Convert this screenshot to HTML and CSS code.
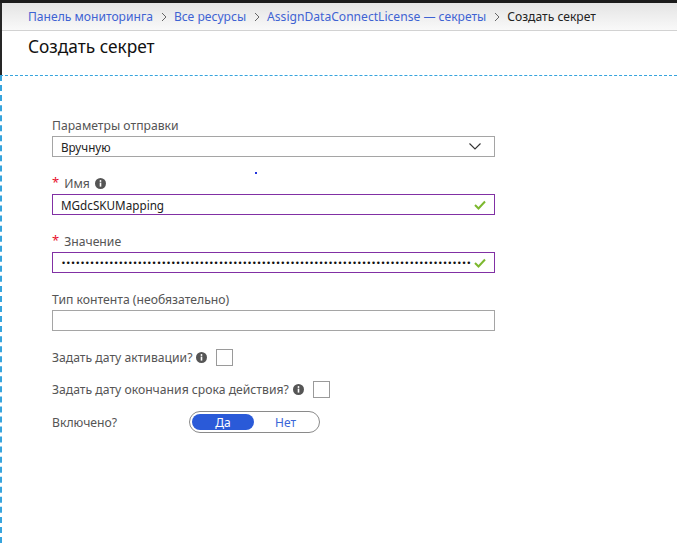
FILE: index.html
```html
<!DOCTYPE html>
<html lang="ru">
<head>
<meta charset="utf-8">
<title>Создать секрет</title>
<link rel="stylesheet" href="styles.css">
</head>
<body>
<div class="topbar"></div>
<header class="head">
  <nav class="crumbs">
    <a class="crumb">Панель мониторинга</a>
    <span class="sep"><svg width="8" height="10" viewBox="0 0 8 10"><polyline points="2,1 6,5 2,9" fill="none" stroke="#666" stroke-width="1"/></svg></span>
    <a class="crumb">Все ресурсы</a>
    <span class="sep"><svg width="8" height="10" viewBox="0 0 8 10"><polyline points="2,1 6,5 2,9" fill="none" stroke="#666" stroke-width="1"/></svg></span>
    <a class="crumb">AssignDataConnectLicense — секреты</a>
    <span class="sep"><svg width="8" height="10" viewBox="0 0 8 10"><polyline points="2,1 6,5 2,9" fill="none" stroke="#666" stroke-width="1"/></svg></span>
    <span class="current">Создать секрет</span>
  </nav>
  <div class="titlebar">
    <h1 class="title">Создать секрет</h1>
  </div>
</header>
<main class="form">
  <span class="stray-dot"></span>
  <div class="field">
    <label class="label">Параметры отправки</label>
    <div class="box box-select">
      <span class="value">Вручную</span>
      <svg class="chev" width="12" height="7" viewBox="0 0 12 7"><polyline points="0.5,0.5 6,6 11.5,0.5" fill="none" stroke="#333" stroke-width="1.1"/></svg>
    </div>
  </div>
  <div class="field">
    <label class="label"><span class="req">*</span>Имя<svg class="info" width="11" height="11" viewBox="0 0 11 11"><circle cx="5.5" cy="5.5" r="5.5" fill="#555"/><rect x="4.7" y="4.6" width="1.6" height="4" fill="#fff"/><circle cx="5.5" cy="3" r="0.95" fill="#fff"/></svg></label>
    <div class="box box-valid">
      <span class="value">MGdcSKUMapping</span>
      <svg class="check" width="12" height="10" viewBox="0 0 12 10"><polyline points="1,5 4.5,8.5 11,1.5" fill="none" stroke="#7cb82f" stroke-width="2"/></svg>
    </div>
  </div>
  <div class="field">
    <label class="label"><span class="req">*</span>Значение</label>
    <div class="box box-valid">
      <span class="dots">••••••••••••••••••••••••••••••••••••••••••••••••••••••••••••••••••••••••••••••••••••••</span>
      <svg class="check" width="12" height="10" viewBox="0 0 12 10"><polyline points="1,5 4.5,8.5 11,1.5" fill="none" stroke="#7cb82f" stroke-width="2"/></svg>
    </div>
  </div>
  <div class="field">
    <label class="label">Тип контента (необязательно)</label>
    <div class="box"></div>
  </div>
  <div class="row row-first">
    <span class="label-inline">Задать дату активации?</span>
    <svg class="info info-row" width="11" height="11" viewBox="0 0 11 11"><circle cx="5.5" cy="5.5" r="5.5" fill="#555"/><rect x="4.7" y="4.6" width="1.6" height="4" fill="#fff"/><circle cx="5.5" cy="3" r="0.95" fill="#fff"/></svg>
    <span class="checkbox"></span>
  </div>
  <div class="row">
    <span class="label-inline">Задать дату окончания срока действия?</span>
    <svg class="info info-row" width="11" height="11" viewBox="0 0 11 11"><circle cx="5.5" cy="5.5" r="5.5" fill="#555"/><rect x="4.7" y="4.6" width="1.6" height="4" fill="#fff"/><circle cx="5.5" cy="3" r="0.95" fill="#fff"/></svg>
    <span class="checkbox"></span>
  </div>
  <div class="row row-toggle">
    <span class="label-inline toggle-label">Включено?</span>
    <div class="toggle">
      <span class="opt opt-on">Да</span>
      <span class="opt opt-off">Нет</span>
    </div>
  </div>
</main>
</body>
</html>
```
FILE: styles.css
```css
* { box-sizing: border-box; }
html, body { margin: 0; padding: 0; background: #fff; }
body {
  font-family: "Noto Sans", "Open Sans", sans-serif;
  color: #222;
  width: 677px;
  height: 543px;
  overflow: hidden;
  display: flex;
  flex-direction: column;
}
.topbar { height: 3px; background: #1b1b1b; flex: none; }
.head { border-left: 2px solid #262626; flex: none; }
.crumbs {
  height: 28px;
  display: flex;
  align-items: center;
  padding-left: 26px;
  background: linear-gradient(#e4e4e4, #f9f9f9);
  border-bottom: 1px solid #d2d2d2;
  font-size: 12.1px;
  white-space: nowrap;
}
.crumb { color: #3e63d3; text-decoration: none; }
.current { color: #222; }
.sep { display: inline-flex; align-items: center; margin: 0 6px 0 7px; }
.titlebar { height: 44px; padding: 4px 0 0 26px; background: #fff; }
.title { margin: 0; font-weight: 400; font-size: 17.3px; line-height: 24px; color: #111; }
.form {
  position: relative;
  flex: 1;
  border-top: 1px dashed #36a4dd;
  border-left: 2px dashed #36a4dd;
  padding: 41px 0 0 50px;
}
.stray-dot {
  position: absolute;
  left: 253px;
  top: 96px;
  width: 2px;
  height: 2px;
  background: #2233dd;
}
.field { width: 443px; margin-bottom: 18px; }
.label {
  display: flex;
  align-items: center;
  height: 16px;
  margin-bottom: 3px;
  font-size: 12.2px;
  color: #555;
}
.req { color: #e8112d; margin-right: 5px; font-size: 13px; position: relative; top: -1px; }
.info { margin-left: 5px; flex: none; }
.box {
  height: 21px;
  border: 1px solid #a5a5a5;
  display: flex;
  align-items: center;
  padding: 0 6px 0 8px;
  font-size: 11.7px;
  color: #222;
}
.value { flex: 1; }
.box-select .chev { margin-right: 7px; }
.box-valid { border-color: #8130a4; }
.check { flex: none; margin-left: auto; margin-right: 2px; }
.dots {
  white-space: nowrap;
  font-family: "DejaVu Sans", sans-serif;
  font-size: 8.6px;
  letter-spacing: -0.3px;
  color: #111;
}
.row {
  display: flex;
  align-items: center;
  height: 20px;
  margin-bottom: 12px;
  font-size: 12.2px;
  color: #555;
}
.row-first { margin-top: -2px; }
.info-row { margin-left: 4px; }
.checkbox {
  width: 17px;
  height: 17px;
  border: 1px solid #9a9a9a;
  margin-left: 9px;
  background: #fff;
}
.row-toggle { height: 22px; }
.toggle-label { width: 137px; }
.toggle {
  width: 131px;
  height: 22px;
  border: 1px solid #8a8a8a;
  border-radius: 11px;
  padding: 2px;
  display: flex;
  align-items: center;
}
.opt { font-size: 12px; display: flex; align-items: center; justify-content: center; height: 16px; }
.opt-on {
  width: 62px;
  background: #2a5ad8;
  color: #fff;
  border-radius: 8px;
}
.opt-off { flex: 1; color: #3b66d8; }
```
